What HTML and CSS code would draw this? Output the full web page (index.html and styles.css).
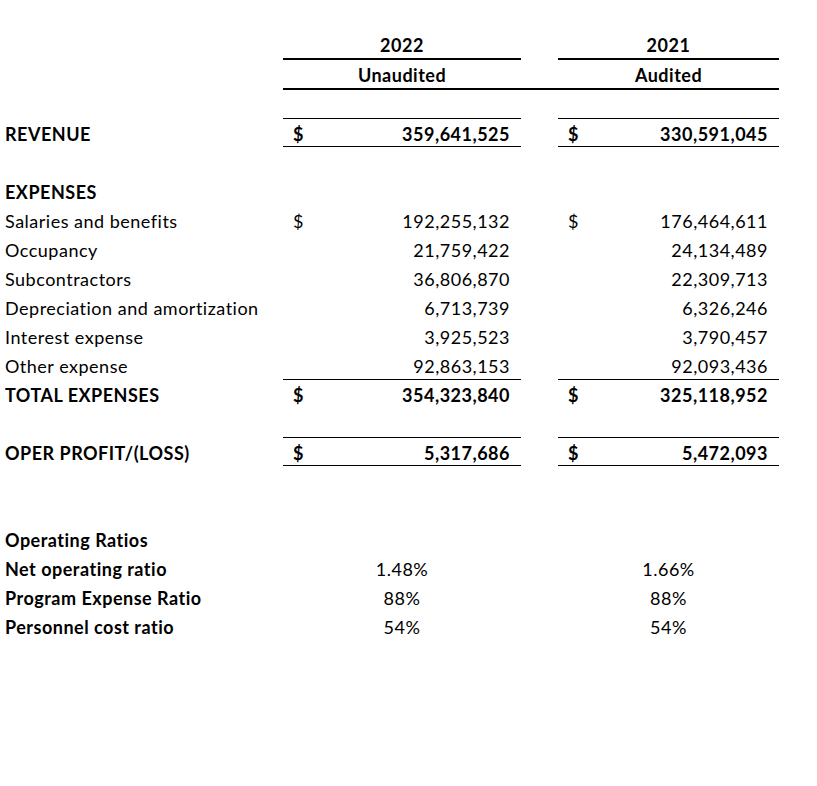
FILE: index.html
```html
<!DOCTYPE html>
<html>
<head>
<meta charset="utf-8">
<link rel="stylesheet" href="styles.css">
</head>
<body>
<div class="sheet">
  <div class="row r-h1">
    <div class="label"></div>
    <div class="cell center bold thick-b">2022</div>
    <div class="gap"></div>
    <div class="cell center bold thick-b">2021</div>
  </div>
  <div class="row r-h2">
    <div class="label"></div>
    <div class="cell center bold thick-b">Unaudited</div>
    <div class="gap thick-b"></div>
    <div class="cell center bold thick-b">Audited</div>
  </div>
  <div class="row r-h3"></div>

  <div class="row">
    <div class="label bold">REVENUE</div>
    <div class="cell money bold thin-tb"><span>$</span><span>359,641,525</span></div>
    <div class="gap"></div>
    <div class="cell money bold thin-tb"><span>$</span><span>330,591,045</span></div>
  </div>
  <div class="row"></div>
  <div class="row"><div class="label bold">EXPENSES</div></div>
  <div class="row">
    <div class="label">Salaries and benefits</div>
    <div class="cell money"><span>$</span><span>192,255,132</span></div>
    <div class="gap"></div>
    <div class="cell money"><span>$</span><span>176,464,611</span></div>
  </div>
  <div class="row">
    <div class="label">Occupancy</div>
    <div class="cell money"><span></span><span>21,759,422</span></div>
    <div class="gap"></div>
    <div class="cell money"><span></span><span>24,134,489</span></div>
  </div>
  <div class="row">
    <div class="label">Subcontractors</div>
    <div class="cell money"><span></span><span>36,806,870</span></div>
    <div class="gap"></div>
    <div class="cell money"><span></span><span>22,309,713</span></div>
  </div>
  <div class="row">
    <div class="label">Depreciation and amortization</div>
    <div class="cell money"><span></span><span>6,713,739</span></div>
    <div class="gap"></div>
    <div class="cell money"><span></span><span>6,326,246</span></div>
  </div>
  <div class="row">
    <div class="label">Interest expense</div>
    <div class="cell money"><span></span><span>3,925,523</span></div>
    <div class="gap"></div>
    <div class="cell money"><span></span><span>3,790,457</span></div>
  </div>
  <div class="row">
    <div class="label">Other expense</div>
    <div class="cell money"><span></span><span>92,863,153</span></div>
    <div class="gap"></div>
    <div class="cell money"><span></span><span>92,093,436</span></div>
  </div>
  <div class="row">
    <div class="label bold">TOTAL EXPENSES</div>
    <div class="cell money bold thin-t"><span>$</span><span>354,323,840</span></div>
    <div class="gap"></div>
    <div class="cell money bold thin-t"><span>$</span><span>325,118,952</span></div>
  </div>
  <div class="row"></div>
  <div class="row">
    <div class="label bold">OPER PROFIT/(LOSS)</div>
    <div class="cell money bold thin-tb"><span>$</span><span>5,317,686</span></div>
    <div class="gap"></div>
    <div class="cell money bold thin-tb"><span>$</span><span>5,472,093</span></div>
  </div>
  <div class="row"></div>
  <div class="row"></div>
  <div class="row"><div class="label bold">Operating Ratios</div></div>
  <div class="row">
    <div class="label bold">Net operating ratio</div>
    <div class="cell center">1.48%</div>
    <div class="gap"></div>
    <div class="cell center">1.66%</div>
  </div>
  <div class="row">
    <div class="label bold">Program Expense Ratio</div>
    <div class="cell center">88%</div>
    <div class="gap"></div>
    <div class="cell center">88%</div>
  </div>
  <div class="row">
    <div class="label bold">Personnel cost ratio</div>
    <div class="cell center">54%</div>
    <div class="gap"></div>
    <div class="cell center">54%</div>
  </div>
</div>
</body>
</html>
```

FILE: styles.css
```css
* { box-sizing: border-box; }
html, body {
  margin: 0;
  padding: 0;
  background: #fff;
}
body {
  font-family: "Lato", "Open Sans", sans-serif;
  font-size: 18px;
  letter-spacing: 0.5px;
  color: #000;
}
.sheet {
  padding-top: 30px;
  width: 817px;
}
.row {
  display: grid;
  grid-template-columns: 283px 238px 37px 221px;
  height: 29px;
}
.r-h1 { height: 30px; }
.r-h2 { height: 30px; }
.r-h3 { height: 28px; }
.label, .cell {
  display: flex;
  align-items: center;
  white-space: nowrap;
  padding-top: 2px;
}
.label { padding-left: 5px; }
.bold { font-weight: 700; }
.center { justify-content: center; }
.money {
  justify-content: space-between;
  padding-right: 11px;
  padding-left: 10px;
}
.thick-b { border-bottom: 2px solid #000; }
.thin-tb { border-top: 1px solid #000; border-bottom: 1px solid #000; }
.thin-t { border-top: 1px solid #000; }
```
